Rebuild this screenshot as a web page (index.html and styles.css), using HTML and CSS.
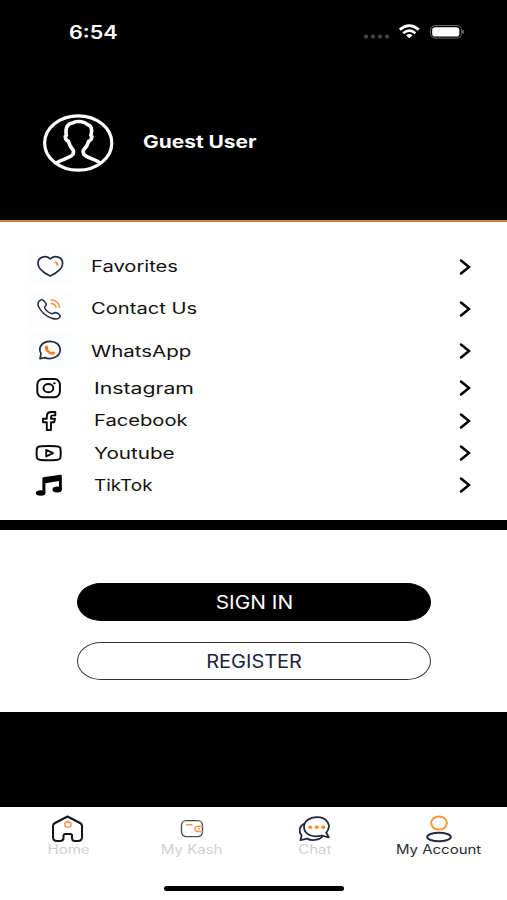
FILE: index.html
```html
<!DOCTYPE html>
<html lang="en">
<head>
<meta charset="utf-8">
<title>My Account</title>
<link rel="stylesheet" href="styles.css">
</head>
<body>
<header class="header">
  <div class="status">
    <span class="time">6:54</span>
    <svg class="signals" width="104" height="24" viewBox="0 0 104 24">
      <g fill="#454545"><circle cx="6" cy="14.5" r="2.1"/><circle cx="13" cy="14.5" r="2.1"/><circle cx="20" cy="14.5" r="2.1"/><circle cx="27" cy="14.5" r="2.1"/></g>
      <g fill="none" stroke="#fff" stroke-width="2.7"><path d="M39.8 7.6Q49.3-.2 58.8 7.6M43.2 11.2Q49.3 6.2 55.4 11.2"/></g>
      <path d="M46 13.2Q49.3 10.8 52.6 13.2L49.3 16.3Z" fill="#fff"/>
      <rect x="70.5" y="3.5" width="31" height="12.6" rx="4.5" fill="none" stroke="#666"/>
      <rect x="72.2" y="5.2" width="27.2" height="9.4" rx="3.2" fill="#fff"/>
      <path d="M103 8v3.6" stroke="#777" stroke-width="1.5"/>
    </svg>
  </div>
  <div class="profile">
    <svg class="avatar" width="72" height="60" viewBox="0 0 72 60" fill="none" stroke="#fff" stroke-width="3.2">
      <ellipse cx="36.2" cy="30" rx="33.6" ry="27.2"/>
      <path stroke-width="3.6" d="M14.5 50C19 46.5 28 45 30.8 41.5C32 39.5 31.5 37 30 35.5C27.5 33 27 30 26.5 28.3Q23.3 27 23.3 23.5L24.3 22.3C23 14 26 10.5 30.5 10C34 7.5 42 8 45.5 11.5C50.5 13 50 18.5 48.9 22.3L49.9 23.5Q49.7 27 46.6 28.3C45.8 31 45 33.5 42.6 35.5C41 37 40.8 39.5 42 41.5C45 45 54 46.5 58 50"/>
    </svg>
    <h1 class="name"><span class="fit">Guest User</span></h1>
  </div>
</header>
<main>
  <nav class="menu">
    <a class="row tall"><svg class="icon" viewBox="0 0 44 36"><path d="M22.2 27C17 24.5 10 20.5 10 14.5C10 7.5 18 6 22.2 9.8C27 6 34.6 7.5 34.6 14.5C34.6 20.5 27.5 24.5 22.2 27Z" fill="none" stroke="#252b40" stroke-width="1.7"/><path d="M27 12.8Q29.8 13.8 29.6 16.8" fill="none" stroke="#ff8b2c" stroke-width="1.8"/></svg><span class="label favorites">Favorites</span><svg class="chevron" viewBox="0 0 14 18"><path d="M3 2.5L11 9L3 15.5"/></svg></a>
    <a class="row tall"><svg class="icon" viewBox="0 0 44 36"><path d="M12 9.3C14.5 7.6 18.3 11.3 18.2 13.8C18 15.3 16.2 15.6 16.7 17C18 19.6 20.8 21.8 23.8 22.7C25.3 23 25.7 21.5 27.2 21.5C29.7 21.6 33 24.3 31.8 26.1C29 30.5 20.5 26.8 16 22.7C11.2 18.2 7.5 12.5 12 9.3Z" fill="none" stroke="#252b40" stroke-width="1.5"/><path d="M22.4 8.8Q31 9.4 31.8 17.2M22.8 12.4Q27.6 13 28.2 17" fill="none" stroke="#ff9a54" stroke-width="1.6"/></svg><span class="label contact">Contact Us</span><svg class="chevron" viewBox="0 0 14 18"><path d="M3 2.5L11 9L3 15.5"/></svg></a>
    <a class="row tall"><svg class="icon" viewBox="0 0 44 36"><path d="M12 25.6L13 20.7C9.5 14.4 14.5 8.3 22 8.3C28 8.3 32.2 12 32.2 16.8C32.2 23.6 23.5 27.5 16.8 24.6Z" fill="none" stroke="#252b40" stroke-width="1.7" stroke-linejoin="round"/><path d="M18.2 12.6C20.3 12.5 21 14.7 19.8 15.6C20.3 17.6 22.1 18.8 23.9 19.1C25.2 17.9 27.4 18.9 27.2 20.2C26.2 22.6 22.5 21.9 19.7 19.8C16.8 17.5 15.5 14 18.2 12.6Z" fill="#ff7d1f"/></svg><span class="label whatsapp">WhatsApp</span><svg class="chevron" viewBox="0 0 14 18"><path d="M3 2.5L11 9L3 15.5"/></svg></a>
    <a class="row"><svg class="icon plain" viewBox="0 0 44 32"><g fill="none" stroke="#0a0a0a" stroke-width="2"><rect x="9.3" y="7" width="22.6" height="18.2" rx="5.5"/><ellipse cx="20.4" cy="16.2" rx="4.9" ry="4.1"/></g><ellipse cx="26.4" cy="11.2" rx="1.2" ry="1"/></svg><span class="label instagram">Instagram</span><svg class="chevron" viewBox="0 0 14 18"><path d="M3 2.5L11 9L3 15.5"/></svg></a>
    <a class="row"><svg class="icon plain" viewBox="0 0 44 32"><path d="M27.3 7V10.4H24.4Q23 10.4 23 12V13.8H27L26.2 17.2H23V25H18.8V17.2H15V13.8H18.8V11.4Q18.8 7 23.5 7Z" fill="none" stroke="#0a0a0a" stroke-width="1.9" stroke-linejoin="round"/></svg><span class="label facebook">Facebook</span><svg class="chevron" viewBox="0 0 14 18"><path d="M3 2.5L11 9L3 15.5"/></svg></a>
    <a class="row"><svg class="icon plain" viewBox="0 0 44 32"><path d="M13 9.3Q20.5 8.6 28 9.3Q32.3 9.5 32.5 12Q33 16 32.5 20Q32.3 22.7 28 22.9Q20.5 23.5 13 22.9Q9 22.7 8.8 20Q8.3 16 8.8 12Q9 9.5 13 9.3Z" fill="none" stroke="#0a0a0a" stroke-width="2"/><path d="M18.2 12.8L25 16.1L18.2 19.4Z" fill="none" stroke="#0a0a0a" stroke-width="1.8" stroke-linejoin="round"/></svg><span class="label youtube">Youtube</span><svg class="chevron" viewBox="0 0 14 18"><path d="M3 2.5L11 9L3 15.5"/></svg></a>
    <a class="row"><svg class="icon plain" viewBox="0 0 44 32"><path d="M14.4 9.2Q14.4 8.5 15.2 8.3L32.3 5.8Q33.8 5.7 33.8 7V20.4H31V12L17.4 14.2V24H14.4Z"/><ellipse cx="12.7" cy="24" rx="4.8" ry="2.8"/><ellipse cx="29.2" cy="20.5" rx="4.7" ry="2.9"/></svg><span class="label tiktok">TikTok</span><svg class="chevron" viewBox="0 0 14 18"><path d="M3 2.5L11 9L3 15.5"/></svg></a>
  </nav>
  <section class="auth">
    <button class="btn sign-in"><span class="fit">SIGN IN</span></button>
    <button class="btn register"><span class="fit">REGISTER</span></button>
  </section>
</main>
<footer class="tabs">
  <a class="tab home"><svg viewBox="0 0 40 32"><path d="M19.5 5.5L32 12Q34 13 34 15V26Q34 30 30 30H27Q24 30 24 27V24.5Q24 23 22 23H17.5Q15.5 23 15.5 24.5V27Q15.5 30 12 30H9Q5 30 5 26V15Q5 13 7 12Z" fill="none" stroke="#111719" stroke-width="2" stroke-linejoin="round"/><ellipse cx="19.8" cy="13.6" rx="3.2" ry="2.7" fill="none" stroke="#ff9a54" stroke-width="1.6"/></svg><span>Home</span></a>
  <a class="tab kash"><svg viewBox="0 0 40 32"><rect x="9.5" y="9.6" width="21" height="16" rx="4.8" fill="none" stroke="#4b5058" stroke-width="1.4"/><path d="M14 13.8H20.5M30.8 15.2H26Q23 15.2 23 18Q23 20.5 26 20.5H30.8M26 17.8H28" fill="none" stroke="#ff9a54" stroke-width="1.4"/></svg><span>My Kash</span></a>
  <a class="tab chat"><svg viewBox="0 0 40 32"><g fill="#fff" stroke="#202942" stroke-width="1.8" stroke-linejoin="round"><path d="M9.5 12.5C4 15 3.4 20.5 6.6 24.5L5.5 29.2L12 27.6C17.5 30.4 26 28.9 28 24.4"/><path d="M31.2 21.5C37.5 14.5 31.8 6.2 22 6.2C14 6.2 9 10.5 9 15.9C9 22.6 17 27.2 26.5 24.5L33.8 26.4Z"/></g><g fill="#ff8b2c"><ellipse cx="15.2" cy="16.2" rx="2.1" ry="1.8"/><ellipse cx="21.8" cy="16.2" rx="2.1" ry="1.8"/><ellipse cx="28.2" cy="16.2" rx="2.1" ry="1.8"/></g></svg><span>Chat</span></a>
  <a class="tab account"><svg viewBox="0 0 40 32"><ellipse cx="20" cy="12" rx="7.8" ry="6.6" fill="none" stroke="#f8953a" stroke-width="2"/><ellipse cx="20" cy="26" rx="11.8" ry="4.2" fill="none" stroke="#252b40" stroke-width="2"/></svg><span>My Account</span></a>
  <div class="home-indicator"></div>
</footer>
</body>
</html>
```
FILE: styles.css
```css
* { box-sizing: border-box; }
body {
  margin: 0;
  width: 507px;
  height: 900px;
  display: flex;
  flex-direction: column;
  overflow: hidden;
  background: #000;
  color: #111;
  font-family: Inter, "Open Sans", sans-serif;
}
.header {
  height: 222px;
  color: #fff;
  border-bottom: 2px solid #cf8134;
}
.status {
  display: flex;
  justify-content: space-between;
  align-items: flex-start;
  padding: 22px 43px 0 69px;
}
.time {
  margin-top: 1px;
  font-size: 18px;
  font-weight: 600;
  line-height: 20px;
  transform: scaleX(1.2);
  transform-origin: left;
}
.profile {
  display: flex;
  align-items: center;
  gap: 29px;
  padding: 66px 0 0 42px;
}
.avatar { margin-top: 1px; }
.name {
  margin: -2px 0 0;
  font-size: 17px;
  line-height: 24px;
  font-weight: 700;
}
.fit { display: inline-block; }
.name .fit { transform: scaleX(1.23); transform-origin: left; }
.menu {
  height: 298px;
  padding: 23.5px 35px 0 28px;
  background: #fff;
}
.row {
  display: flex;
  align-items: center;
  height: 32.4px;
}
.row.tall { height: 42.2px; }
.icon {
  width: 44px;
  height: 36px;
  flex: none;
  background: #fbfdff;
}
.icon.plain { height: 32px; background: none; }
.label {
  margin: 1.4px 0 0 21.5px;
  font-size: 15.5px;
  line-height: 24px;
  transform: scaleX(1.3);
  transform-origin: left;
}
.tall .label { margin-left: 19px; }
.whatsapp { transform: scaleX(1.32); }
.instagram { transform: scaleX(1.37); }
.youtube { transform: scaleX(1.33); }
.tiktok { transform: scaleX(1.22); }
.chevron {
  width: 14px;
  height: 18px;
  margin-left: auto;
  fill: none;
  stroke: #000;
  stroke-width: 2.5;
  stroke-linecap: round;
}
.auth {
  height: 192px;
  padding: 53px 76px 0 77px;
  border-top: 10px solid #000;
  background: #fff;
  display: flex;
  flex-direction: column;
  gap: 21px;
}
.btn {
  height: 38px;
  padding: 1px 0 0;
  border: 1.4px solid #333;
  border-radius: 24px / 19px;
  background: #fff;
  color: #1b2140;
  font: 400 18px/34px Inter, sans-serif;
}
.sign-in { background: #000; color: #fff; border-color: #000; }
.sign-in .fit { transform: scaleX(1.16); }
.register .fit { transform: scaleX(1.11); }
.tabs {
  height: 93px;
  margin-top: auto;
  background: #fff;
  padding-top: 4px;
  display: grid;
  grid-template-columns: repeat(4, 123.6px);
  grid-template-rows: 70px 1fr;
  justify-content: center;
}
.tab {
  display: flex;
  flex-direction: column;
  align-items: center;
  color: #d0d0d2;
  font-size: 12.5px;
}
.tab svg { width: 40px; height: 32px; flex: none; }
.tab span {
  line-height: 14px;
  white-space: nowrap;
  transform: scaleX(1.2);
}
.tab.account { color: #2b2d36; }
.home-indicator {
  grid-column: 1 / -1;
  justify-self: center;
  width: 180px;
  height: 5px;
  margin-top: 5px;
  border-radius: 3px;
  background: #000;
}
```
